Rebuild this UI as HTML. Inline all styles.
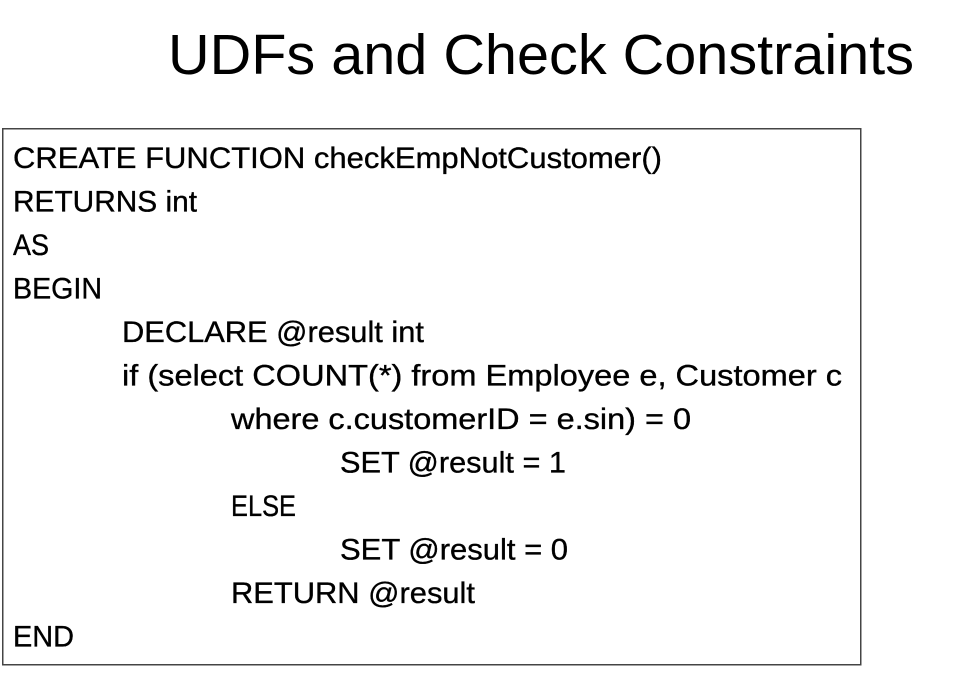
<!DOCTYPE html>
<html><head><style>
html,body{margin:0;padding:0;background:#fff;width:974px;height:685px;overflow:hidden}
svg text{font-family:"Liberation Sans",sans-serif;fill:#000}
</style></head><body>
<svg width="974" height="685" xmlns="http://www.w3.org/2000/svg">
<text x="168" y="74" font-size="57" textLength="746" lengthAdjust="spacingAndGlyphs" fill="#111">UDFs and Check Constraints</text>
<rect x="2.75" y="128.75" width="858" height="536" fill="none" stroke="#444" stroke-width="1.5"/>
<g font-size="30" stroke="#000" stroke-width="0.35">
<text x="13" y="168" textLength="649" lengthAdjust="spacingAndGlyphs">CREATE FUNCTION checkEmpNotCustomer()</text>
<text x="13" y="211.5" textLength="184" lengthAdjust="spacingAndGlyphs">RETURNS int</text>
<text x="13" y="255" textLength="36" lengthAdjust="spacingAndGlyphs">AS</text>
<text x="13" y="298.5" textLength="89" lengthAdjust="spacingAndGlyphs">BEGIN</text>
<text x="122" y="342" textLength="302" lengthAdjust="spacingAndGlyphs">DECLARE @result int</text>
<text x="122" y="385.5" textLength="720" lengthAdjust="spacingAndGlyphs">if (select COUNT(*) from Employee e, Customer c</text>
<text x="231" y="429" textLength="460" lengthAdjust="spacingAndGlyphs">where c.customerID = e.sin) = 0</text>
<text x="340" y="472.5" textLength="226" lengthAdjust="spacingAndGlyphs">SET @result = 1</text>
<text x="231" y="516" textLength="65" lengthAdjust="spacingAndGlyphs">ELSE</text>
<text x="340" y="559.5" textLength="228" lengthAdjust="spacingAndGlyphs">SET @result = 0</text>
<text x="231" y="603" textLength="244" lengthAdjust="spacingAndGlyphs">RETURN @result</text>
<text x="13" y="646.5" textLength="61" lengthAdjust="spacingAndGlyphs">END</text>
</g>
</svg>
</body></html>
